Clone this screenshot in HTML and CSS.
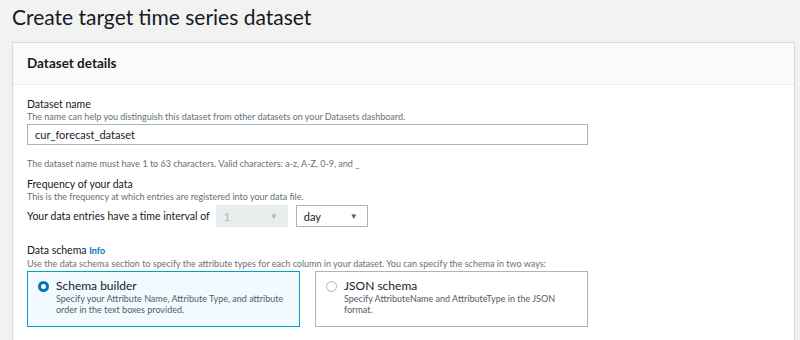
FILE: index.html
```html
<!DOCTYPE html>
<html>

<head>
    <title>Create target time series dataset</title>
    <meta charset="utf-8" />
    <link rel="stylesheet" href="styles.css">
</head>

<body>
    <h1 class="page-title">Create target time series dataset</h1>
    <div class="card">
        <div class="card-header">Dataset details</div>
        <div class="card-body">
            <div class="field field-name">
                <div class="label">Dataset name</div>
                <div class="desc">The name can help you distinguish this dataset from other datasets on your Datasets dashboard.</div>
                <div class="text-input">cur_forecast_dataset</div>
                <div class="hint">The dataset name must have 1 to 63 characters. Valid characters: a-z, A-Z, 0-9, and _</div>
            </div>
            <div class="field field-freq">
                <div class="label">Frequency of your data</div>
                <div class="desc">This is the frequency at which entries are registered into your data file.</div>
                <div class="interval-row">
                    <span class="interval-text">Your data entries have a time interval of</span>
                    <div class="select disabled"><span>1</span><span class="caret">&#9660;</span></div>
                    <div class="select"><span>day</span><span class="caret">&#9660;</span></div>
                </div>
            </div>
            <div class="field">
                <div class="label">Data schema <span class="info">Info</span></div>
                <div class="desc">Use the data schema section to specify the attribute types for each column in your dataset. You can specify the schema in two ways:</div>
                <div class="tiles">
                    <div class="tile selected">
                        <span class="radio checked"></span>
                        <div>
                            <div class="tile-title">Schema builder</div>
                            <div class="tile-desc">Specify your Attribute Name, Attribute Type, and attribute order in the text boxes provided.</div>
                        </div>
                    </div>
                    <div class="tile">
                        <span class="radio"></span>
                        <div>
                            <div class="tile-title">JSON schema</div>
                            <div class="tile-desc">Specify AttributeName and AttributeType in the JSON format.</div>
                        </div>
                    </div>
                </div>
            </div>
        </div>
    </div>
</body>

</html>
```

FILE: styles.css
```css
body {
    margin: 0;
    background-color: #f2f2f2;
    font-family: Lato, "Liberation Sans", sans-serif;
    color: #16191f;
    overflow: hidden;
}

.page-title {
    font-size: 21px;
    font-weight: 400;
    margin: 0;
    padding: 2px 12px 0;
    height: 40px;
    line-height: 30px;
    color: #16191f;
}

.card {
    margin: 0 5px 0 12px;
    background-color: #fff;
    border: 1px solid #d5dbdb;
    border-bottom: none;
    box-shadow: 0 1px 1px rgba(0, 0, 0, 0.1);
}

.card-header {
    background-color: #fafafa;
    border-bottom: 1px solid #eaeded;
    height: 41px;
    line-height: 41px;
    padding-left: 14px;
    font-size: 13.5px;
    font-weight: 700;
}

.card-body {
    padding: 12px 14px 20px;
}

.field-name {
    margin-bottom: 7px;
}

.field-freq {
    margin-bottom: 16px;
}

.label {
    font-size: 10.5px;
    line-height: 14px;
}

.desc,
.hint {
    font-size: 9px;
    line-height: 12px;
    color: #687078;
}

.hint {
    margin-top: 13px;
}

.text-input {
    width: 552px;
    height: 19px;
    line-height: 19px;
    margin-top: 1px;
    padding-left: 7px;
    border: 1px solid #aab7b8;
    font-size: 11px;
}

.interval-row {
    display: flex;
    align-items: center;
    margin-top: 2px;
    font-size: 10.5px;
}

.interval-text {
    margin-right: 6px;
}

.select {
    display: flex;
    justify-content: space-between;
    align-items: center;
    box-sizing: border-box;
    width: 72px;
    height: 22px;
    margin-right: 8px;
    padding: 0 9px 0 7px;
    border: 1px solid #aab7b8;
    background-color: #fff;
    font-size: 11px;
}

.select .caret {
    font-size: 8px;
    color: #545b64;
}

.select.disabled {
    background-color: #eaeded;
    border-color: #eaeded;
    color: #aab7b8;
}

.select.disabled .caret {
    color: #aab7b8;
}

.info {
    font-size: 9px;
    font-weight: 700;
    color: #0073bb;
}

.tiles {
    display: flex;
    gap: 15px;
    margin-top: 1px;
}

.tile {
    display: flex;
    gap: 7px;
    box-sizing: border-box;
    width: 273px;
    height: 56px;
    padding: 7px 10px;
    border: 1px solid #aab7b8;
    background-color: #fff;
}

.tile.selected {
    background-color: #f1faff;
    border-color: #00a1c9;
}

.radio {
    flex: none;
    box-sizing: border-box;
    width: 11px;
    height: 11px;
    margin-top: 2px;
    border: 1px solid #aab7b8;
    border-radius: 50%;
    background-color: #fff;
}

.radio.checked {
    border: 3.5px solid #0073bb;
}

.tile-title {
    font-size: 12px;
    line-height: 14px;
}

.tile-desc {
    font-size: 9px;
    line-height: 11px;
    color: #545b64;
}
```
